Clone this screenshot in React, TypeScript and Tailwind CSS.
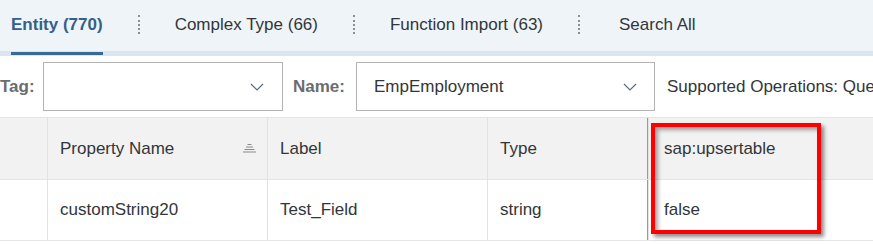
import React from "react";

const font = { fontFamily: '"Liberation Sans", Arial, sans-serif' };

function Sep() {
  return <div className="mx-[35px] h-[19px] w-0 shrink-0 border-l-2 border-dotted border-[#8a8f94]" />;
}

function Chevron() {
  return (
    <svg width="14" height="8" viewBox="0 0 14 8" fill="none">
      <path d="M1 1 L7 7 L13 1" stroke="#5b6c7d" strokeWidth="1.2" />
    </svg>
  );
}

export default function App() {
  return (
    <div className="w-[873px] h-[244px] overflow-hidden bg-white text-[17px] text-[#32363a]" style={font}>
      {/* Tabs */}
      <div className="h-[56px] bg-[#eff4f9] border-b-[5px] border-[#dbe5ef] flex items-center pl-[11px] pb-[2px] whitespace-nowrap">
        <div className="relative h-full flex items-center shrink-0">
          <span className="font-bold text-[#346187]">Entity (770)</span>
          <div className="absolute left-0 right-0 -bottom-[6px] h-[3px] bg-[#386a96]" />
        </div>
        <Sep />
        <span className="shrink-0">Complex Type (66)</span>
        <Sep />
        <span className="shrink-0">Function Import (63)</span>
        <Sep />
        <span className="shrink-0 ml-[4px]">Search All</span>
      </div>

      {/* Filter row */}
      <div className="h-[61px] flex items-center whitespace-nowrap">
        <span className="font-bold text-[#6a6d70] w-[43px] shrink-0">Tag:</span>
        <div className="w-[240px] h-[49px] shrink-0 border border-[#b3b3b3] flex items-center justify-end pr-[18px]">
          <Chevron />
        </div>
        <span className="font-bold text-[#6a6d70] ml-[10px] w-[63px] shrink-0">Name:</span>
        <div className="w-[299px] h-[49px] shrink-0 border border-[#b3b3b3] flex items-center justify-between pl-[17px] pr-[17px]">
          <span>EmpEmployment</span>
          <Chevron />
        </div>
        <span className="ml-[12px] shrink-0">Supported Operations: Query</span>
      </div>

      {/* Table */}
      <div className="relative">
        <div className="flex h-[63px] bg-[#f2f2f2] border-t border-b border-[#e5e5e5]">
          <div className="w-[48px] shrink-0 border-r border-[#e2e2e2]" />
          <div className="w-[220px] shrink-0 border-r border-[#e2e2e2] flex items-center pl-[12px] pr-[11px] justify-between">
            <span>Property Name</span>
            <svg width="13" height="9" viewBox="0 0 13 9">
              <rect x="4.5" y="0" width="4" height="1" fill="#8a8a8a" />
              <rect x="3" y="2.5" width="7" height="1" fill="#8a8a8a" />
              <rect x="1.5" y="5" width="10" height="1" fill="#8a8a8a" />
              <rect x="0" y="7.5" width="13" height="1" fill="#8a8a8a" />
            </svg>
          </div>
          <div className="w-[220px] shrink-0 border-r border-[#e2e2e2] flex items-center pl-[12px]">Label</div>
          <div className="w-[160px] shrink-0 border-r border-[#9a9a9a] flex items-center pl-[12px]">Type</div>
          <div className="flex-1 border-l border-[#e2e2e2] flex items-center pl-[15px]">sap:upsertable</div>
        </div>
        <div className="flex h-[61px] bg-white border-b border-[#e5e5e5]">
          <div className="w-[48px] shrink-0 border-r border-[#e2e2e2]" />
          <div className="w-[220px] shrink-0 border-r border-[#e2e2e2] flex items-center pl-[12px]">customString20</div>
          <div className="w-[220px] shrink-0 border-r border-[#e2e2e2] flex items-center pl-[12px]">Test_Field</div>
          <div className="w-[160px] shrink-0 border-r border-[#9a9a9a] flex items-center pl-[12px]">string</div>
          <div className="flex-1 border-l border-[#e2e2e2] flex items-center pl-[15px]">false</div>
        </div>
        <div className="absolute left-[651px] top-[6px] w-[170px] h-[111px] border-[4px] border-[#ff0000] shadow-[3px_3px_4px_rgba(0,0,0,0.45),inset_3px_3px_4px_rgba(0,0,0,0.35)]" />
      </div>
    </div>
  );
}
